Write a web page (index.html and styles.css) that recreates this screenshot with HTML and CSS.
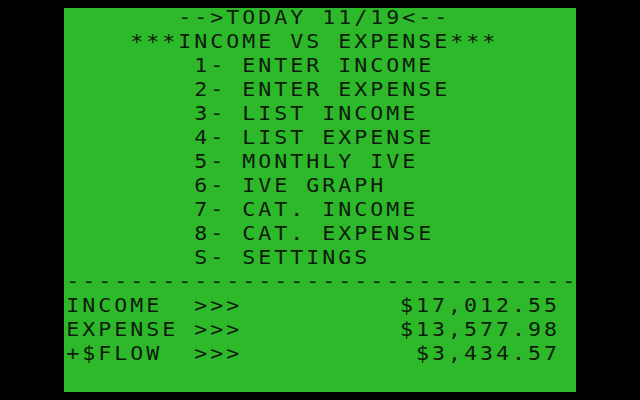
FILE: index.html
```html
<!DOCTYPE html>
<html>
<head>
<meta charset="utf-8">
<link rel="stylesheet" href="styles.css">
</head>
<body>
<div class="screen">
  <div class="text">
    <div class="row title">--&gt;TODAY 11/19&lt;--</div>
    <div class="row heading">***INCOME VS EXPENSE***</div>
    <div class="row item">1- ENTER INCOME</div>
    <div class="row item">2- ENTER EXPENSE</div>
    <div class="row item">3- LIST INCOME</div>
    <div class="row item">4- LIST EXPENSE</div>
    <div class="row item">5- MONTHLY IVE</div>
    <div class="row item">6- IVE GRAPH</div>
    <div class="row item">7- CAT. INCOME</div>
    <div class="row item">8- CAT. EXPENSE</div>
    <div class="row item">S- SETTINGS</div>
    <div class="row">--------------------------------</div>
    <div class="row total"><span class="label">INCOME</span><span class="arrows">&gt;&gt;&gt;</span><span class="value">$17,012.55</span></div>
    <div class="row total"><span class="label">EXPENSE</span><span class="arrows">&gt;&gt;&gt;</span><span class="value">$13,577.98</span></div>
    <div class="row total"><span class="label">+$FLOW</span><span class="arrows">&gt;&gt;&gt;</span><span class="value">$3,434.57</span></div>
    <div class="row"></div>
  </div>
</div>
</body>
</html>
```
FILE: styles.css
```css
html, body {
  margin: 0;
  padding: 0;
  background: #000;
  width: 640px;
  height: 400px;
  overflow: hidden;
}
.screen {
  width: 512px;
  height: 384px;
  margin: 8px auto 0;
  background: #2db92a;
}
/* 32 x 16 character grid: each cell 16 x 24 px after the horizontal stretch */
.text {
  width: 474.07px;
  padding-left: 2px;
  box-sizing: border-box;
  transform: scaleX(1.08);
  transform-origin: 0 0;
  font-family: "DejaVu Sans Mono", monospace;
  font-size: 20px;
  letter-spacing: 2.775px;
  line-height: 18px;
  color: #0d1c0c;
}
.row {
  height: 24px;
  white-space: pre;
}
.title { padding-left: 103.7px; }
.heading { padding-left: 59.26px; }
.item { padding-left: 118.52px; }
.total {
  display: flex;
  padding-right: 14.81px;
}
.label { width: 118.52px; }
.arrows { flex: 1; }
.value { text-align: right; }
```
